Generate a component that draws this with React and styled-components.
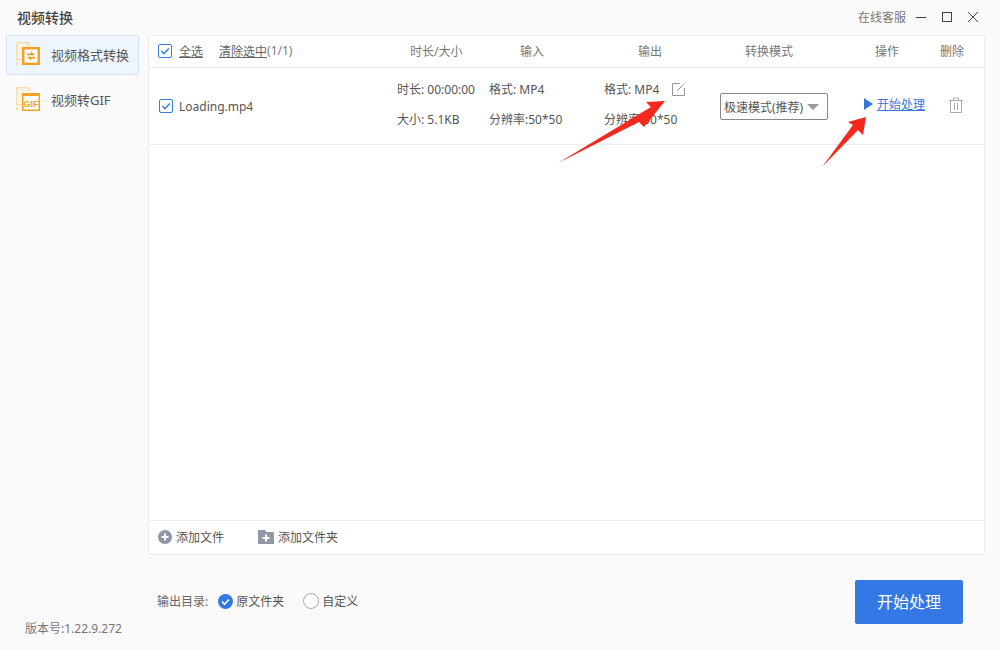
import React from 'react'
import styled, {createGlobalStyle} from 'styled-components'

const GlobalStyle = createGlobalStyle`
	html, body {
		margin: 0;
		padding: 0;
		background: #fafafa;
	}
	body {
		font-family: "Noto Sans", "Noto Sans CJK SC", sans-serif;
		font-size: 12px;
		color: #555;
	}
	* {
		box-sizing: border-box;
	}
`

const Page = styled.div`
	position: relative;
	width: 1000px;
	height: 650px;
	overflow: hidden;
	background: #fafafa;
`

const TitleBar = styled.header`
	display: flex;
	align-items: center;
	height: 35px;
	padding: 0 22px 2px 17px;
`

const AppTitle = styled.h1`
	flex: 1;
	margin: 0;
	font-size: 14px;
	font-weight: 500;
	color: #444;
`

const ServiceLink = styled.span`
	margin-right: 10px;
	color: #777;
`

const WindowButton = styled.button`
	display: flex;
	padding: 0;
	margin-left: 16px;
	border: 0;
	background: none;
	color: #444;

	&:first-of-type {
		margin-left: 0;
	}
`

const Body = styled.div`
	display: flex;
	align-items: flex-start;
	padding-left: 6px;
`

const Sidebar = styled.nav`
	width: 133px;
	margin-right: 9px;
`

const NavItem = styled.div`
	display: flex;
	align-items: center;
	height: 40px;
	margin-bottom: 5px;
	padding: 0 0 2px 9px;
	font-size: 13px;
	color: #555;
	border: 1px solid ${p => (p.$active ? '#d5e3f3' : 'transparent')};
	border-radius: 2px;
	background: ${p => (p.$active ? '#eff5fd' : 'transparent')};

	svg {
		margin-right: 11px;
		flex: none;
	}
`

const Main = styled.main`
	display: flex;
	flex-direction: column;
	width: 837px;
`

const Panel = styled.section`
	display: flex;
	flex-direction: column;
	height: 520px;
	background: #fff;
	border: 1px solid #ececec;
`

const HeaderRow = styled.div`
	display: grid;
	grid-template-columns: 252px 110px 118px 107px 130px 65px 1fr;
	align-items: center;
	height: 32px;
	padding: 0 0 2px 9px;
	border-bottom: 1px solid #ececec;
	color: #777;
`

const SelectTools = styled.div`
	display: flex;
	align-items: center;
`

const ToolLink = styled.span`
	margin-left: ${p => p.$gap || 0}px;
	color: #666;
	text-decoration: underline;
`

const Count = styled.span`
	color: #777;
`

const FileRow = styled.div`
	display: grid;
	grid-template-columns: 238px 92px 115px 116px 144px 84px 1fr;
	align-items: center;
	height: 77px;
	padding-left: 10px;
	border-bottom: 1px solid #ececec;
`

const FileName = styled.div`
	display: flex;
	align-items: center;
	gap: 6px;
	color: #555;
`

const InfoCell = styled.div`
	display: flex;
	flex-direction: column;
	gap: 12px;
	margin-top: -3px;
	white-space: nowrap;
	line-height: 18px;
`

const FormatLine = styled.div`
	display: flex;
	align-items: center;
	gap: 13px;
	color: #555;
`

const ModeSelect = styled.div`
	display: flex;
	align-items: center;
	justify-content: space-between;
	width: 108px;
	height: 27px;
	padding: 2px 8px 0 3px;
	border: 1px solid #888;
	border-radius: 2px;
	color: #555;
	white-space: nowrap;
`

const Caret = styled.span`
	width: 0;
	height: 0;
	margin-top: -1px;
	border-left: 6px solid transparent;
	border-right: 6px solid transparent;
	border-top: 6px solid #999;
`

const StartAction = styled.div`
	display: flex;
	align-items: center;
	gap: 4px;
	margin-top: -4px;
	color: #3a76d8;
`

const PlayMark = styled.span`
	width: 0;
	height: 0;
	border-top: 6px solid transparent;
	border-bottom: 6px solid transparent;
	border-left: 9px solid #3a76d8;
`

const ActionLink = styled.span`
	text-decoration: underline;
`

const TrashCell = styled.div`
	display: flex;
	margin-top: -3px;
	padding-left: 1px;
	color: #aaa;
`

const Spacer = styled.div`
	flex: 1;
`

const PanelFooter = styled.div`
	display: flex;
	align-items: center;
	height: 34px;
	padding: 0 0 2px 9px;
	border-top: 1px solid #ececec;
`

const AddButton = styled.span`
	display: flex;
	align-items: center;
	gap: 4px;
	margin-right: 34px;
	color: #555;
`

const BottomBar = styled.div`
	display: flex;
	align-items: center;
	height: 44px;
	margin-top: 25px;
	padding: 0 22px 0 9px;
`

const OutputLabel = styled.span`
	margin: -2px 10px 0 0;
	color: #666;
`

const RadioOption = styled.label`
	display: flex;
	align-items: center;
	gap: 3px;
	margin: -2px 19px 0 0;
	color: #555;
`

const RadioOff = styled.span`
	width: 16px;
	height: 16px;
	border: 1px solid #aaa;
	border-radius: 50%;
	background: #fff;
`

const StartButton = styled.button`
	width: 108px;
	height: 44px;
	margin-left: auto;
	padding: 0 0 2px;
	border: 0;
	border-radius: 2px;
	background: #3478e5;
	color: #fff;
	font-family: inherit;
	font-size: 16px;
`

const Version = styled.div`
	position: absolute;
	left: 25px;
	top: 619px;
	color: #777;
`

const ArrowLayer = styled.svg`
	position: absolute;
	left: 0;
	top: 0;
	pointer-events: none;
`

function CheckBox() {
	return (
		<svg width="14" height="14" viewBox="0 0 14 14" style={{flex: 'none'}}>
			<rect x="0.5" y="0.5" width="13" height="13" rx="1.5" fill="#fff" stroke="#3a7be0" />
			<path d="M3.3 7l2.6 2.7 4.9-5.2" fill="none" stroke="#3a7be0" strokeWidth="1.5" />
		</svg>
	)
}

function SideIcon({children}) {
	return (
		<svg width="24" height="24" viewBox="0 0 24 24">
			<path d="M0.8 0.8h12v3.5M0.8 0.8v17h5" fill="none" stroke="#fbdcae" strokeWidth="1.6" />
			<path d="M2.5 2.5h9v2.5h-6v11h-3z" fill="#fff3e0" />
			<path d="M0 19.5l3 2.2L0 24z" fill="#fbd9a8" />
			{children}
		</svg>
	)
}

function ConvertIcon() {
	return (
		<SideIcon>
			<rect x="6" y="5" width="18" height="18" fill="#f6a02a" />
			<rect x="8.5" y="7.5" width="13" height="13" fill="#fff" />
			<path d="M11 13.2h8l-4-4v2.2h-4zM19 14.8h-8l4 4v-2.2h4z" fill="#f09a22" />
		</SideIcon>
	)
}

function GifIcon() {
	return (
		<SideIcon>
			<rect x="6" y="6" width="18" height="18" fill="#f6a02a" />
			<rect x="7.5" y="9" width="15" height="13.5" fill="#fff" />
			<text x="15" y="19.5" fontSize="9" fontWeight="700" textAnchor="middle" fill="#f6a02a" fontFamily="Liberation Sans, sans-serif">GIF</text>
		</SideIcon>
	)
}

function EditIcon() {
	return (
		<svg width="13" height="13" viewBox="0 0 13 13" fill="none" stroke="#999">
			<path d="M8 0.5H0.5v12h12V5" />
			<path d="M5.5 7.5l7-7" />
		</svg>
	)
}

function TrashIcon() {
	return (
		<svg width="14" height="16" viewBox="0 0 14 16" fill="none" stroke="currentColor">
			<path d="M0 3.5h14M4.5 3.5v-2.5h5v2.5M1.5 3.5v12h11v-12M5.5 6v7M8.5 6v7" />
		</svg>
	)
}

function AddFileIcon() {
	return (
		<svg width="14" height="14" viewBox="0 0 14 14">
			<circle cx="7" cy="7" r="7" fill="#9097a8" />
			<path d="M3.5 7h7M7 3.5v7" stroke="#fff" strokeWidth="2" />
		</svg>
	)
}

function AddFolderIcon() {
	return (
		<svg width="16" height="14" viewBox="0 0 16 14">
			<path d="M0 0h7l1.5 2H16v12H0z" fill="#9097a8" />
			<path d="M4.5 8h7M8 4.5v7" stroke="#fff" strokeWidth="2" />
		</svg>
	)
}

function RadioOn() {
	return (
		<svg width="15" height="15" viewBox="0 0 15 15">
			<circle cx="7.5" cy="7.5" r="7.5" fill="#3478e5" />
			<path d="M4 7.6l2.6 2.6 4.4-4.7" fill="none" stroke="#fff" strokeWidth="1.6" />
		</svg>
	)
}

function App() {
	return (
		<Page>
			<GlobalStyle />
			<TitleBar>
				<AppTitle>视频转换</AppTitle>
				<ServiceLink>在线客服</ServiceLink>
				<WindowButton aria-label="minimize">
					<svg width="10" height="10" viewBox="0 0 10 10" stroke="currentColor">
						<path d="M0 5.5h10" />
					</svg>
				</WindowButton>
				<WindowButton aria-label="maximize">
					<svg width="10" height="10" viewBox="0 0 10 10" fill="none" stroke="currentColor">
						<rect x="0.5" y="0.5" width="9" height="9" />
					</svg>
				</WindowButton>
				<WindowButton aria-label="close">
					<svg width="10" height="10" viewBox="0 0 10 10" stroke="currentColor">
						<path d="M0 0l10 10M10 0L0 10" />
					</svg>
				</WindowButton>
			</TitleBar>
			<Body>
				<Sidebar>
					<NavItem $active>
						<ConvertIcon />
						视频格式转换
					</NavItem>
					<NavItem>
						<GifIcon />
						视频转GIF
					</NavItem>
				</Sidebar>
				<Main>
					<Panel>
						<HeaderRow>
							<SelectTools>
								<CheckBox />
								<ToolLink $gap={7}>全选</ToolLink>
								<ToolLink $gap={16}>清除选中</ToolLink>
								<Count>(1/1)</Count>
							</SelectTools>
							<span>时长/大小</span>
							<span>输入</span>
							<span>输出</span>
							<span>转换模式</span>
							<span>操作</span>
							<span>删除</span>
						</HeaderRow>
						<FileRow>
							<FileName>
								<CheckBox />
								Loading.mp4
							</FileName>
							<InfoCell>
								<span>时长: 00:00:00</span>
								<span>大小: 5.1KB</span>
							</InfoCell>
							<InfoCell>
								<span>格式: MP4</span>
								<span>分辨率:50*50</span>
							</InfoCell>
							<InfoCell>
								<FormatLine>
									格式: MP4
									<EditIcon />
								</FormatLine>
								<span>分辨率:50*50</span>
							</InfoCell>
							<ModeSelect>
								极速模式(推荐)
								<Caret />
							</ModeSelect>
							<StartAction>
								<PlayMark />
								<ActionLink>开始处理</ActionLink>
							</StartAction>
							<TrashCell>
								<TrashIcon />
							</TrashCell>
						</FileRow>
						<Spacer />
						<PanelFooter>
							<AddButton>
								<AddFileIcon />
								添加文件
							</AddButton>
							<AddButton>
								<AddFolderIcon />
								添加文件夹
							</AddButton>
						</PanelFooter>
					</Panel>
					<BottomBar>
						<OutputLabel>输出目录:</OutputLabel>
						<RadioOption>
							<RadioOn />
							原文件夹
						</RadioOption>
						<RadioOption>
							<RadioOff />
							自定义
						</RadioOption>
						<StartButton>开始处理</StartButton>
					</BottomBar>
				</Main>
			</Body>
			<Version>版本号:1.22.9.272</Version>
			<ArrowLayer width="1000" height="650" viewBox="0 0 1000 650">
				<path d="M558 163L651 107L646 102L665 101L644 127L639 122Z" fill="#f4281e" />
				<path d="M822 167L853 125L848 122L866 117L863 135L858 130Z" fill="#f4281e" />
			</ArrowLayer>
		</Page>
	)
}

export default App
